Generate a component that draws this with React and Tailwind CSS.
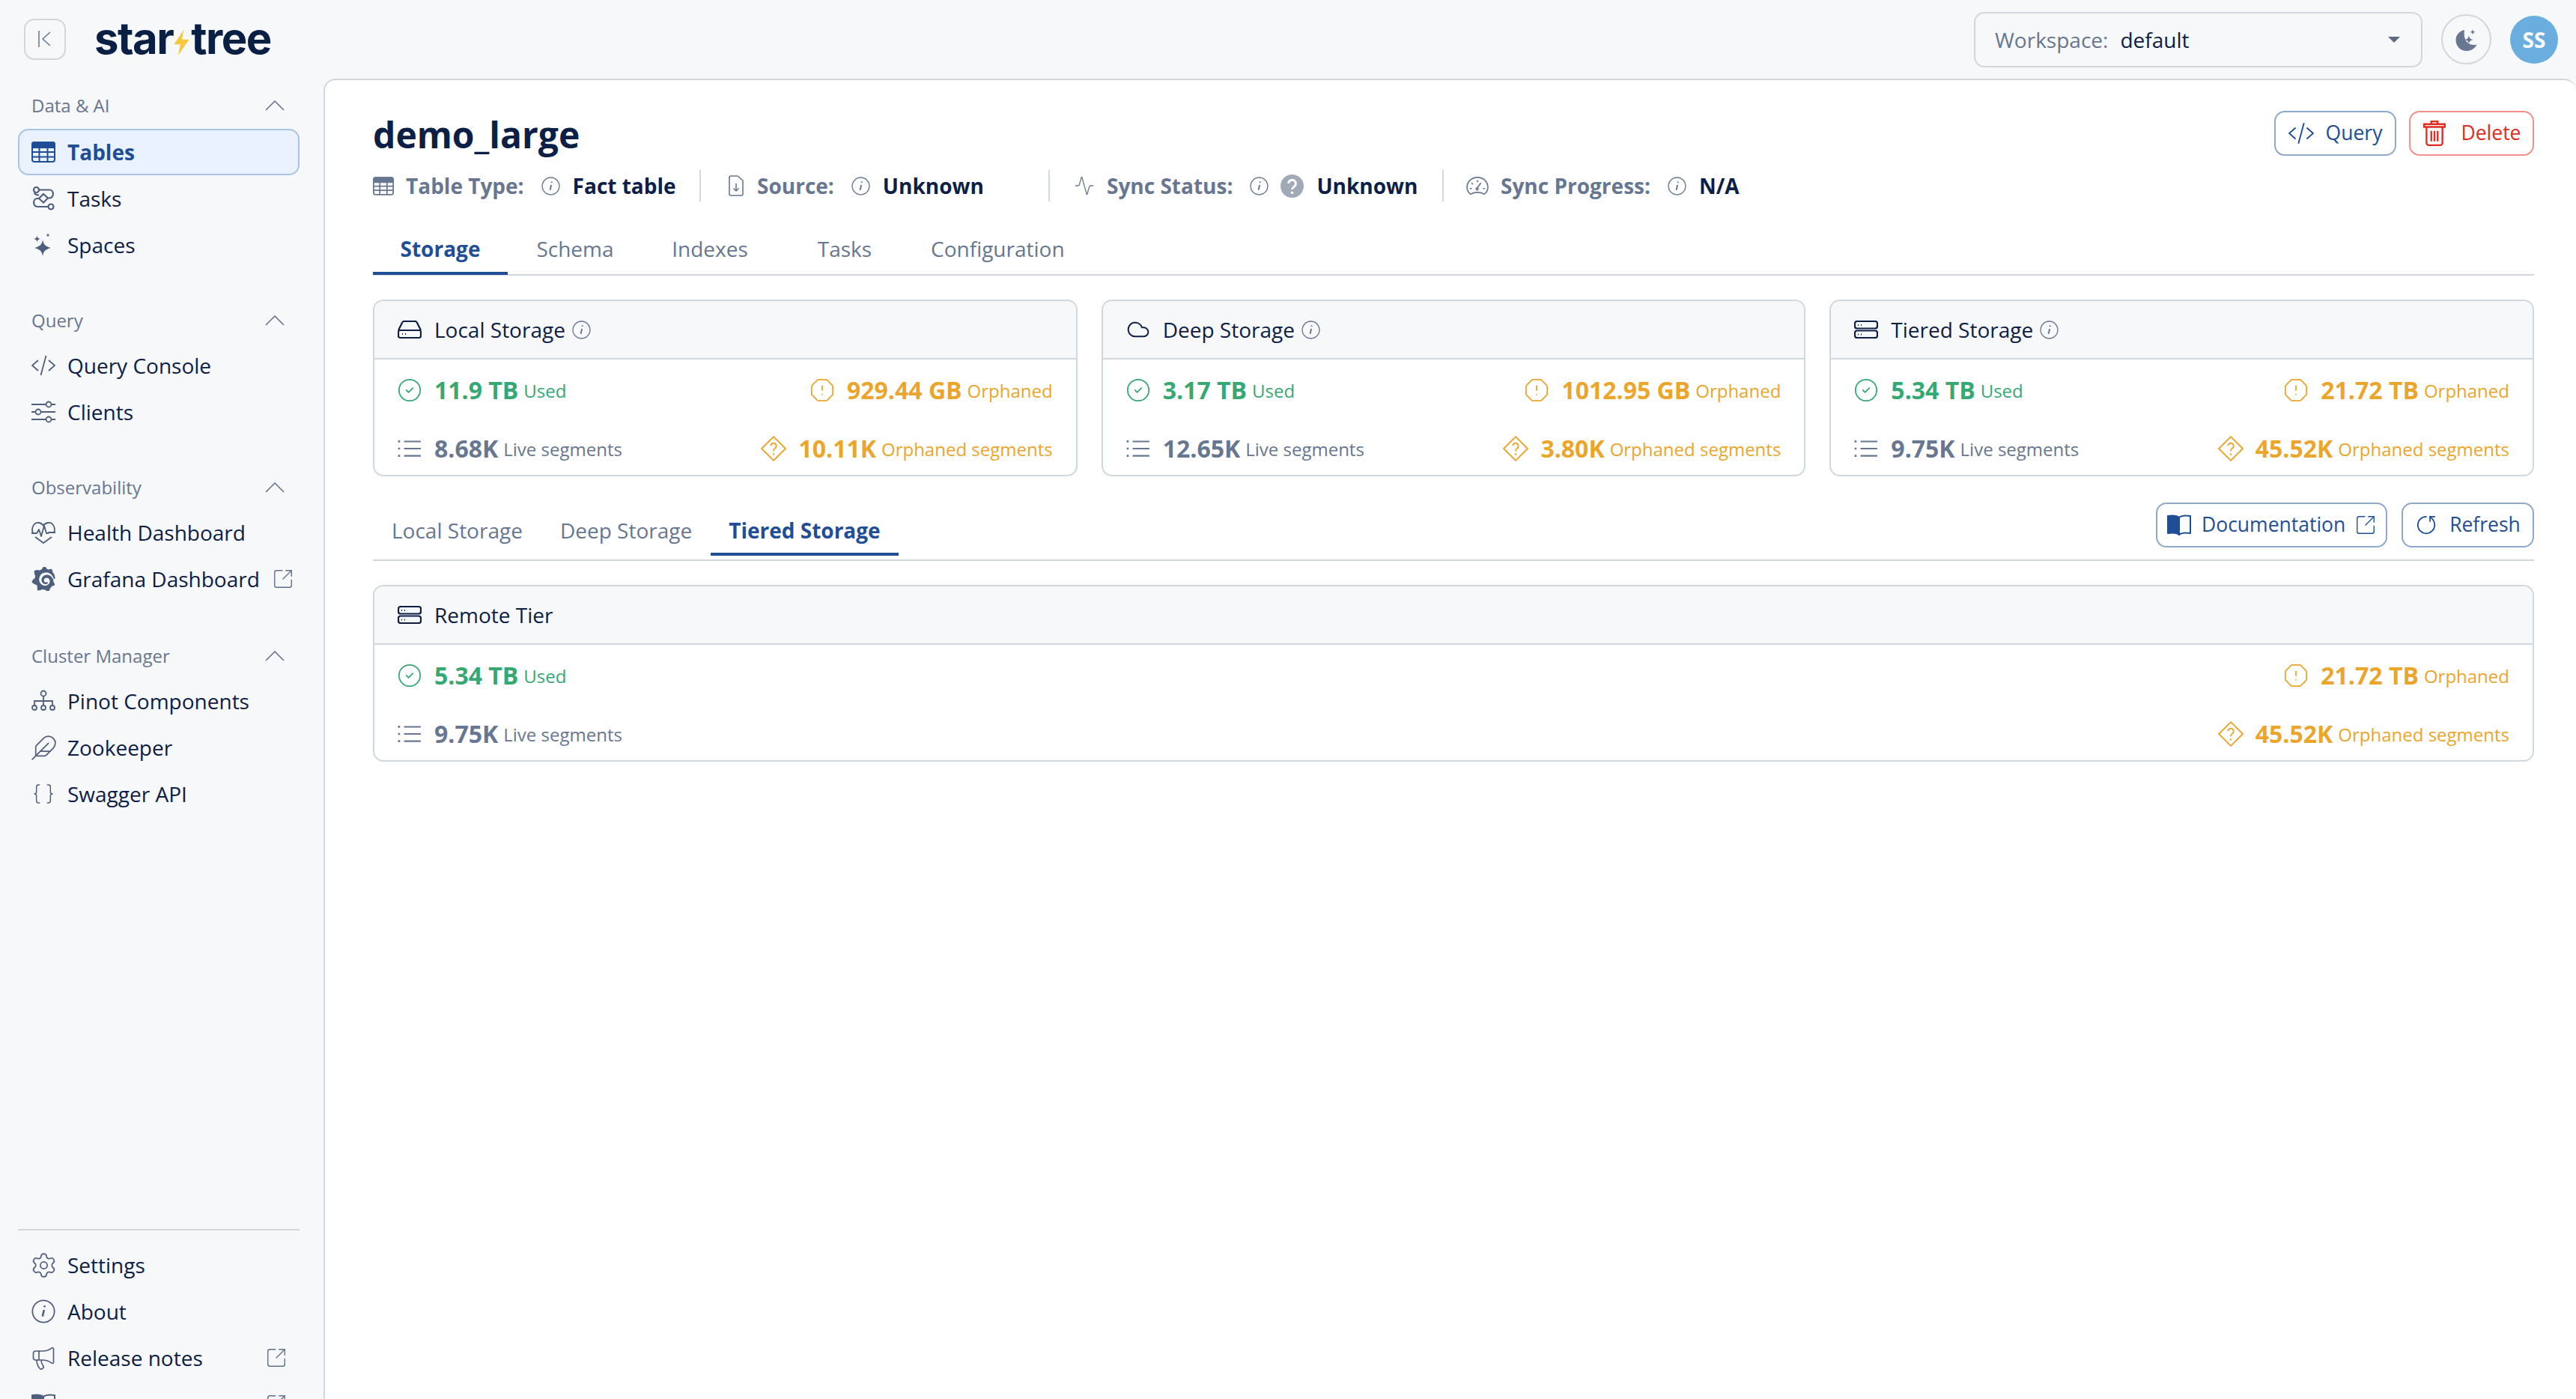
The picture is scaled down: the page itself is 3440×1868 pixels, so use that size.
import React from 'react';
import {
  Activity,
  Braces,
  CircleCheck,
  Cloud,
  Feather,
  Megaphone,
  OctagonAlert,
  RotateCw,
  Settings,
  SquareArrowOutUpRight,
} from 'lucide-react';
import { SiGrafana } from 'react-icons/si';

const TableIcon = ({ className }) => (
  <svg viewBox="0 0 32 28" className={className} fill="none" stroke="currentColor" strokeWidth="2">
    <path d="M1 8V4a3 3 0 0 1 3-3h24a3 3 0 0 1 3 3v4z" fill="currentColor" />
    <rect x="1" y="1" width="30" height="26" rx="3" />
    <path d="M1 14h30M1 20.500h30M10.500 8v19M21.500 8v19" />
  </svg>
);

const TasksIcon = ({ className }) => (
  <svg viewBox="0 0 32 32" className={className} fill="none" stroke="currentColor" strokeWidth="2.200">
    <path d="M10 4.500H24c6.500 0 6.500 11 0 11h-2L16 10l-6 6H8c-6.500 0-6.500 11 0 11h14.500" />
    <path d="M3.500 8.500C5 11 7 11.500 10 11.500M10 16l6 5.500 6-6" />
    <circle cx="6.500" cy="4.500" r="3.500" />
    <circle cx="26" cy="27" r="3.500" />
  </svg>
);

const SparkIcon = ({ className }) => (
  <svg viewBox="0 0 32 32" className={className} fill="currentColor">
    <path d="M15 9c1 6.500 3.500 9 11 11-7.500 2-10 4.500-11 11-1-6.500-3.500-9-11-11 7.500-2 10-4.500 11-11z" />
    <path d="M7.500 3.500c.5 3 1.500 4 4.500 4.500-3 .5-4 1.500-4.500 4.500C7 9.500 6 8.500 3 8c3-.5 4-1.500 4.500-4.500z" />
    <path d="M22 0c.3 2 1 2.700 3 3-2 .3-2.700 1-3 3-.3-2-1-2.700-3-3 2-.3 2.700-1 3-3z" />
  </svg>
);

const CodeIcon = ({ className }) => (
  <svg viewBox="0 0 32 32" className={className} fill="none" stroke="currentColor" strokeWidth="1.800">
    <path d="M9 9l-8 7 8 7M23 9l8 7-8 7M19.500 3l-7 26" />
  </svg>
);

const SlidersIcon = ({ className }) => (
  <svg viewBox="0 0 32 32" className={className} fill="none" stroke="currentColor" strokeWidth="1.800">
    <path d="M0 6h19M27 6h5M0 16h5M13 16h19M0 26h19M27 26h5" />
    <circle cx="23" cy="6" r="3.500" />
    <circle cx="9" cy="16" r="3.500" />
    <circle cx="23" cy="26" r="3.500" />
  </svg>
);

const HealthIcon = ({ className }) => (
  <svg viewBox="0 0 32 32" className={className} fill="none" stroke="currentColor" strokeWidth="1.800" strokeLinejoin="round">
    <path d="M2 17C-1 9 4 2 10 3c3 .5 5 2 6 4 1-2 3-3.500 6-4 6-1 11 6 8 14" />
    <path d="M0 17h7l3-5 3 9 4-14 3 10h2l1-1h9" />
    <path d="M5 22l11 8 11-8" />
  </svg>
);

const NodesIcon = ({ className }) => (
  <svg viewBox="0 0 32 32" className={className} fill="none" stroke="currentColor" strokeWidth="1.800">
    <circle cx="16" cy="6" r="3.500" />
    <circle cx="4" cy="25" r="3" />
    <circle cx="16" cy="25" r="3" />
    <circle cx="28" cy="25" r="3" />
    <path d="M16 10v12M4 22v-6h24v6" />
  </svg>
);

const InfoIcon = ({ className }) => (
  <svg viewBox="0 0 24 24" className={className} fill="none" stroke="currentColor" strokeWidth="1.300">
    <circle cx="12" cy="12" r="11" />
    <path d="M12.600 10.500l-1.500 6.500" strokeWidth="1.900" />
    <circle cx="13.200" cy="7" r="1" fill="currentColor" stroke="none" />
  </svg>
);

const BookIcon = ({ className }) => (
  <svg viewBox="0 0 32 28" className={className} fill="none" stroke="currentColor" strokeWidth="2" strokeLinejoin="round">
    <path d="M16 4C13 1.500 7 1 1 2v23c6-1 12-.5 15 2z" fill="currentColor" />
    <path d="M16 4c3-2.500 9-3 15-2v23c-6-1-12-.5-15 2z" />
  </svg>
);

const TrashIcon = ({ className }) => (
  <svg viewBox="0 0 32 32" className={className} fill="none" stroke="currentColor" strokeWidth="2.200">
    <path d="M12 4V1h8v3M3 8V4.500h26V8zM6 8v20a3 3 0 0 0 3 3h14a3 3 0 0 0 3-3V8M12 13v13M16 13v13M20 13v13" />
  </svg>
);

const DiskIcon = ({ className }) => (
  <svg viewBox="0 0 32 24" className={className} fill="none" stroke="currentColor" strokeWidth="2.200" strokeLinejoin="round">
    <path d="M1 13L6 3a3 3 0 0 1 3-2h14a3 3 0 0 1 3 2l5 10" />
    <rect x="1" y="13" width="30" height="10" rx="2.500" />
    <path d="M6 18h1M10 18h1" />
  </svg>
);

const ServerIcon = ({ className }) => (
  <svg viewBox="0 0 32 24" className={className} fill="none" stroke="currentColor" strokeWidth="2.200">
    <rect x="1" y="1" width="30" height="9.500" rx="3" />
    <rect x="1" y="13.500" width="30" height="9.500" rx="3" />
    <path d="M5 6h1M9 6h1M5 18.500h1M9 18.500h1" />
  </svg>
);

const DiamondIcon = ({ className }) => (
  <svg viewBox="0 0 32 32" className={className} fill="none" stroke="currentColor" strokeWidth="1.800" strokeLinejoin="round">
    <path d="M16 1l15 15-15 15L1 16z" />
    <path d="M12.500 12.500a3.500 3.500 0 1 1 5.500 3c-1.300.9-2 1.700-2 3.500" />
    <circle cx="16" cy="23" r="1.200" fill="currentColor" stroke="none" />
  </svg>
);

const ListIcon = ({ className }) => (
  <svg viewBox="0 0 32 32" className={className} fill="none" stroke="currentColor" strokeWidth="2">
    <path d="M9 7h21M9 16h21M9 25h21" />
    <path d="M1.500 7h2.500M1.500 16h2.500M1.500 25h2.500" strokeWidth="2.500" />
  </svg>
);

const FileIcon = ({ className }) => (
  <svg viewBox="0 0 20 28" className={className} fill="none" stroke="currentColor" strokeWidth="1.600" strokeLinejoin="round">
    <path d="M3 1h9l7 6v18a2 2 0 0 1-2 2H3a2 2 0 0 1-2-2V3a2 2 0 0 1 2-2z" />
    <path d="M10 11v10M6.500 17.500l3.500 3.500 3.500-3.500" />
  </svg>
);

const GaugeIcon = ({ className }) => (
  <svg viewBox="0 0 32 28" className={className} fill="none" stroke="currentColor" strokeWidth="1.800" strokeLinejoin="round">
    <path d="M6 26C2.500 23.500 1 20 1 16.500 1 8 7.500 2 16 2s15 6 15 14.500c0 3.500-1.500 7-5 9.500-3-1.500-6-2.500-10-2.500s-7 1-10 2.500z" />
    <path d="M16 6v3M7.500 10l2 2M5 18h3M24 18h3M15 18l6-8" />
    <circle cx="15.500" cy="18.500" r="1.500" />
  </svg>
);

const MoonIcon = ({ className }) => (
  <svg viewBox="0 0 32 32" className={className} fill="currentColor">
    <path d="M13 3C6 4.500 1.500 10 1.500 16.500 1.500 25 8 31 16 31c6 0 11-3.500 13.500-8.500-8 2-19-2-16.500-19.500z" />
    <path d="M24 2c.4 2.500 1.200 3.300 3.500 3.800-2.300.4-3.100 1.200-3.500 3.700-.4-2.500-1.200-3.300-3.500-3.700 2.300-.5 3.100-1.300 3.500-3.800z" />
    <path d="M19 10c.6 4 2 5.500 6 6-4 .6-5.400 2-6 6-.6-4-2-5.400-6-6 4-.5 5.400-2 6-6z" />
  </svg>
);

const HelpDot = ({ className }) => (
  <svg viewBox="0 0 32 32" className={className}>
    <circle cx="16" cy="16" r="16" fill="currentColor" />
    <path d="M11 12.500a5 5 0 1 1 7.800 4.100c-1.900 1.300-2.800 2-2.800 4" fill="none" stroke="#fff" strokeWidth="3" />
    <circle cx="16" cy="25" r="1.900" fill="#fff" />
  </svg>
);

const Chevron = () => (
  <svg viewBox="0 0 26 14" className="w-[26px] h-[14px] text-[#5f6f8c]" fill="none" stroke="currentColor" strokeWidth="1.500">
    <path d="M1 13L13 1l12 12" />
  </svg>
);

const navSections = [
  {
    title: 'Data & AI',
    headCls: 'mb-[7px]',
    items: [
      { label: 'Tables', icon: TableIcon, active: true },
      { label: 'Tasks', icon: TasksIcon },
      { label: 'Spaces', icon: SparkIcon },
    ],
  },
  {
    title: 'Query',
    gap: 'mt-[46px]',
    headCls: 'mb-[5px]',
    items: [
      { label: 'Query Console', icon: CodeIcon },
      { label: 'Clients', icon: SlidersIcon },
    ],
  },
  {
    title: 'Observability',
    gap: 'mt-[46px]',
    headCls: 'mb-[5px]',
    items: [
      { label: 'Health Dashboard', icon: HealthIcon },
      { label: 'Grafana Dashboard', icon: SiGrafana, external: true },
    ],
  },
  {
    title: 'Cluster Manager',
    gap: 'mt-[48px]',
    headCls: 'mb-[5px]',
    items: [
      { label: 'Pinot Components', icon: NodesIcon },
      { label: 'Zookeeper', icon: Feather, iconCls: 'w-[37px] h-[37px]' },
      { label: 'Swagger API', icon: Braces },
    ],
  },
];

// last row is cut by the bottom of the window, only its icons show
const footerItems = [
  { label: 'Settings', icon: Settings, iconCls: 'w-[37px] h-[37px]' },
  { label: 'About', icon: InfoIcon },
  { label: 'Release notes', icon: Megaphone, iconCls: 'w-[36px] h-[36px]', external: true },
  { label: '', icon: BookIcon, external: true },
];

const storageCards = [
  { title: 'Local Storage', icon: DiskIcon, iconCls: 'w-[32px] h-[24px]', used: '11.9 TB', orphaned: '929.44 GB', live: '8.68K', orphanedSeg: '10.11K' },
  { title: 'Deep Storage', icon: Cloud, iconCls: 'w-[34px] h-[34px]', used: '3.17 TB', orphaned: '1012.95 GB', live: '12.65K', orphanedSeg: '3.80K' },
  { title: 'Tiered Storage', icon: ServerIcon, iconCls: 'w-[32px] h-[24px]', used: '5.34 TB', orphaned: '21.72 TB', live: '9.75K', orphanedSeg: '45.52K' },
];

const NavItem = ({ item }) => {
  const Icon = item.icon;
  return (
    <div
      className={
        item.active
          ? 'h-[62px] flex items-center pl-[16px] pr-[18px] gap-[16px] rounded-[14px] border-2 border-[#aac3e4] bg-[#e9f2fe] text-[#1f4e96] font-bold'
          : 'h-[62px] flex items-center pl-[18px] pr-[18px] gap-[16px] text-[#0c2047] whitespace-nowrap'
      }
    >
      <span className={item.active ? 'w-[32px] shrink-0 flex justify-center text-[#1f4e96]' : 'w-[32px] shrink-0 flex justify-center text-[#4e5e7d]'}>
        <Icon className={`${item.iconCls || 'w-[32px] h-[32px]'} shrink-0`} strokeWidth={1.1} />
      </span>
      <span>{item.label}</span>
      {item.external && <SquareArrowOutUpRight className="ml-auto -mr-[2px] w-[30px] h-[30px] shrink-0 text-[#5f6f8c]" strokeWidth={1.1} />}
    </div>
  );
};

const Metric = ({ icon: Icon, value, label, color, right }) => (
  <div className={`flex items-center ${color} ${right ? 'justify-end' : ''}`}>
    <Icon className="w-[34px] h-[34px] -ml-[1px] shrink-0" strokeWidth={1.25} />
    <span className="ml-[16px] text-[32px] leading-[40px] font-bold">{value}</span>
    <span className="ml-[7px] text-[24px] leading-[40px] mt-[3px]">{label}</span>
  </div>
);

const Card = ({ title, icon: Icon, iconCls, info, used, orphaned, live, orphanedSeg }) => (
  <div className="border-2 border-[#d0d8dd] rounded-[14px] overflow-hidden h-[236px] flex flex-col">
    <div className="h-[78px] shrink-0 bg-[#f7f8fa] border-b-2 border-[#d0d8dd] flex items-center px-[31px] text-[#0c2047] text-[28px]">
      <span className="w-[32px] flex justify-center">
        <Icon className={iconCls} strokeWidth={1.5} />
      </span>
      <span className="ml-[17px]">{title}</span>
      {info && <InfoIcon className="ml-[9px] w-[25px] h-[25px] text-[#677691]" />}
    </div>
    <div className="flex-1 grid grid-cols-2 px-[31px] pt-[19px] pb-[14px] content-between">
      <Metric icon={CircleCheck} value={used} label="Used" color="text-[#35a873]" />
      <Metric icon={OctagonAlert} value={orphaned} label="Orphaned" color="text-[#eba52b]" right />
      <Metric icon={ListIcon} value={live} label="Live segments" color="text-[#677691]" />
      <Metric icon={DiamondIcon} value={orphanedSeg} label="Orphaned segments" color="text-[#eba52b]" right />
    </div>
  </div>
);

const MetaItem = ({ icon: Icon, iconCls, label, value, valueIcon: ValueIcon, width, divider }) => (
  <div className={`flex items-center ${width}`}>
    <Icon className={`${iconCls} text-[#677691]`} strokeWidth={1.1} />
    <span className="ml-[16px] font-bold text-[#677691]">{label}</span>
    <InfoIcon className="ml-[23px] w-[25px] h-[25px] text-[#677691]" />
    {ValueIcon && <ValueIcon className="ml-[16px] w-[31px] h-[31px] text-[#a0a9b8]" />}
    <span className="ml-[17px] font-bold text-[#0c2047]">{value}</span>
    {divider && <span className="ml-auto w-[2px] h-[42px] bg-[#d0d8dd]" />}
  </div>
);

export default function App() {
  return (
    <div className="h-[1868px] overflow-hidden bg-[#f7f8fa] font-['Open_Sans',sans-serif] text-[28px]">
      <header className="h-[105px] flex items-center">
        <button className="ml-[32px] w-[56px] h-[55px] mt-[-1px] rounded-[14px] border-2 border-[#d0d8dd] flex items-center justify-center">
          <svg viewBox="0 0 20 24" className="w-[20px] h-[24px] text-[#677691]" fill="none" stroke="currentColor" strokeWidth="1.500">
            <path d="M2 1v22M17 3l-10 9 10 9" />
          </svg>
        </button>
        <div className="ml-[38px] flex items-center text-[#0a1f44] font-['Inter',sans-serif] font-bold text-[58px] leading-none tracking-[-1.5px] mt-[-4px]">
          <span>star</span>
          <svg viewBox="0 0 20 32" className="w-[22px] h-[34px] mt-[12px] mx-[1px]">
            <path d="M12 0L0 18h8l-3 14 14-20h-9z" fill="#f6c93c" />
          </svg>
          <span>tree</span>
        </div>
        <div className="ml-auto flex items-center pr-[24px]">
          <div className="w-[599px] h-[74px] rounded-[14px] border-2 border-[#d0d8dd] flex items-center pl-[26px] pr-[28px]">
            <span className="text-[#677691]">Workspace:</span>
            <span className="ml-[16px] text-[#0c2047]">default</span>
            <span className="ml-auto w-0 h-0 border-x-[8px] border-x-transparent border-t-[8px] border-t-[#5d6b85]" />
          </div>
          <button className="ml-[25px] w-[67px] h-[67px] rounded-full border-2 border-[#d0d8dd] flex items-center justify-center">
            <MoonIcon className="w-[32px] h-[32px] text-[#677691]" />
          </button>
          <div className="ml-[25px] w-[64px] h-[64px] rounded-full bg-[#6aaee0] text-white font-bold flex items-center justify-center">SS</div>
        </div>
      </header>

      <div className="flex h-[1763px]">
        <aside className="w-[432px] shrink-0 pl-[24px] pr-[32px]">
          <div className="h-[1536px] pt-[12px]">
            {navSections.map((section) => (
              <div key={section.title} className={section.gap}>
                <div className={`h-[48px] ${section.headCls} flex items-center justify-between pl-[18px] pr-[20px] text-[24px] text-[#677691]`}>
                  <span>{section.title}</span>
                  <Chevron />
                </div>
                {section.items.map((item) => (
                  <NavItem key={item.label} item={item} />
                ))}
              </div>
            ))}
          </div>
          <div className="border-t-2 border-[#d0d8dd] pt-[15px]">
            {footerItems.map((item) => (
              <NavItem key={item.label} item={item} />
            ))}
          </div>
        </aside>

        <main className="flex-1 bg-white border-l-2 border-t-2 border-[#d0d8dd] rounded-t-[16px] pl-[64px] pr-[56px] pt-[40px]">
          <div className="flex items-start justify-between">
            <h1 className="text-[48px] leading-[66px] font-bold text-[#0c2047]">demo_large</h1>
            <div className="flex gap-[17px] pt-[1px] text-[26.5px]">
              <button className="w-[163px] h-[60px] rounded-[14px] border-2 border-[#8ea9cc] text-[#1f4e96] flex items-center justify-center gap-[16px]">
                <CodeIcon className="w-[34px] h-[34px]" />
                <span>Query</span>
              </button>
              <button className="w-[167px] h-[60px] rounded-[14px] border-2 border-[#f2908b] text-[#e02b20] flex items-center justify-center gap-[18px]">
                <TrashIcon className="w-[34px] h-[34px]" />
                <span>Delete</span>
              </button>
            </div>
          </div>

          <div className="mt-[14px] h-[42px] flex items-center">
            <MetaItem icon={TableIcon} iconCls="w-[28px] h-[27px]" label="Table Type:" value="Fact table" width="w-[438px]" divider />
            <div className="w-[35px]" />
            <MetaItem icon={FileIcon} iconCls="w-[24px] h-[28px]" label="Source:" value="Unknown" width="w-[431px]" divider />
            <div className="w-[32px]" />
            <MetaItem icon={Activity} iconCls="w-[28px] h-[28px]" label="Sync Status:" value="Unknown" valueIcon={HelpDot} width="w-[494px]" divider />
            <div className="w-[30px]" />
            <MetaItem icon={GaugeIcon} iconCls="w-[30px] h-[26px]" label="Sync Progress:" value="N/A" />
          </div>

          <div className="mt-[31px] flex border-b-2 border-[#d0d8dd] h-[68px]">
            {['Storage', 'Schema', 'Indexes', 'Tasks', 'Configuration'].map((tab, i) => (
              <div
                key={tab}
                className={
                  i === 0
                    ? 'min-w-[180px] px-[25px] h-[67px] flex items-center justify-center font-bold text-[#1f4e96] border-b-[4px] border-[#1f4e96]'
                    : 'min-w-[180px] px-[25px] h-[67px] flex items-center justify-center text-[#677691] pb-[4px]'
                }
              >
                {tab}
              </div>
            ))}
          </div>

          <div className="mt-[32px] grid grid-cols-3 gap-[32px]">
            {storageCards.map((card) => (
              <Card key={card.title} {...card} info />
            ))}
          </div>

          <div className="mt-[33px] flex items-start justify-between border-b-2 border-[#d0d8dd] h-[80px]">
            <div className="flex">
              {['Local Storage', 'Deep Storage', 'Tiered Storage'].map((tab, i) => (
                <div
                  key={tab}
                  className={
                    i === 2
                      ? 'px-[24px] h-[73px] pt-[8px] flex items-center font-bold text-[#1f4e96] border-b-[4px] border-[#1f4e96]'
                      : 'px-[25px] h-[73px] pt-[8px] pb-[4px] flex items-center text-[#677691]'
                  }
                >
                  {tab}
                </div>
              ))}
            </div>
            <div className="flex gap-[19px] pt-[2px] text-[26.5px]">
              <button className="w-[309px] h-[60px] rounded-[14px] border-2 border-[#8ea9cc] text-[#1f4e96] flex items-center pl-[13px] pr-[12px]">
                <BookIcon className="w-[32px] h-[28px]" />
                <span className="ml-[14px]">Documentation</span>
                <SquareArrowOutUpRight className="ml-auto w-[30px] h-[30px]" strokeWidth={1.1} />
              </button>
              <button className="w-[177px] h-[60px] rounded-[14px] border-2 border-[#8ea9cc] text-[#1f4e96] flex items-center justify-center gap-[16px]">
                <RotateCw className="w-[30px] h-[30px] -scale-x-100 rotate-90" strokeWidth={1.4} />
                <span>Refresh</span>
              </button>
            </div>
          </div>

          <div className="mt-[32px]">
            <Card title="Remote Tier" icon={ServerIcon} iconCls="w-[32px] h-[24px]" used="5.34 TB" orphaned="21.72 TB" live="9.75K" orphanedSeg="45.52K" />
          </div>
        </main>
      </div>
    </div>
  );
}
